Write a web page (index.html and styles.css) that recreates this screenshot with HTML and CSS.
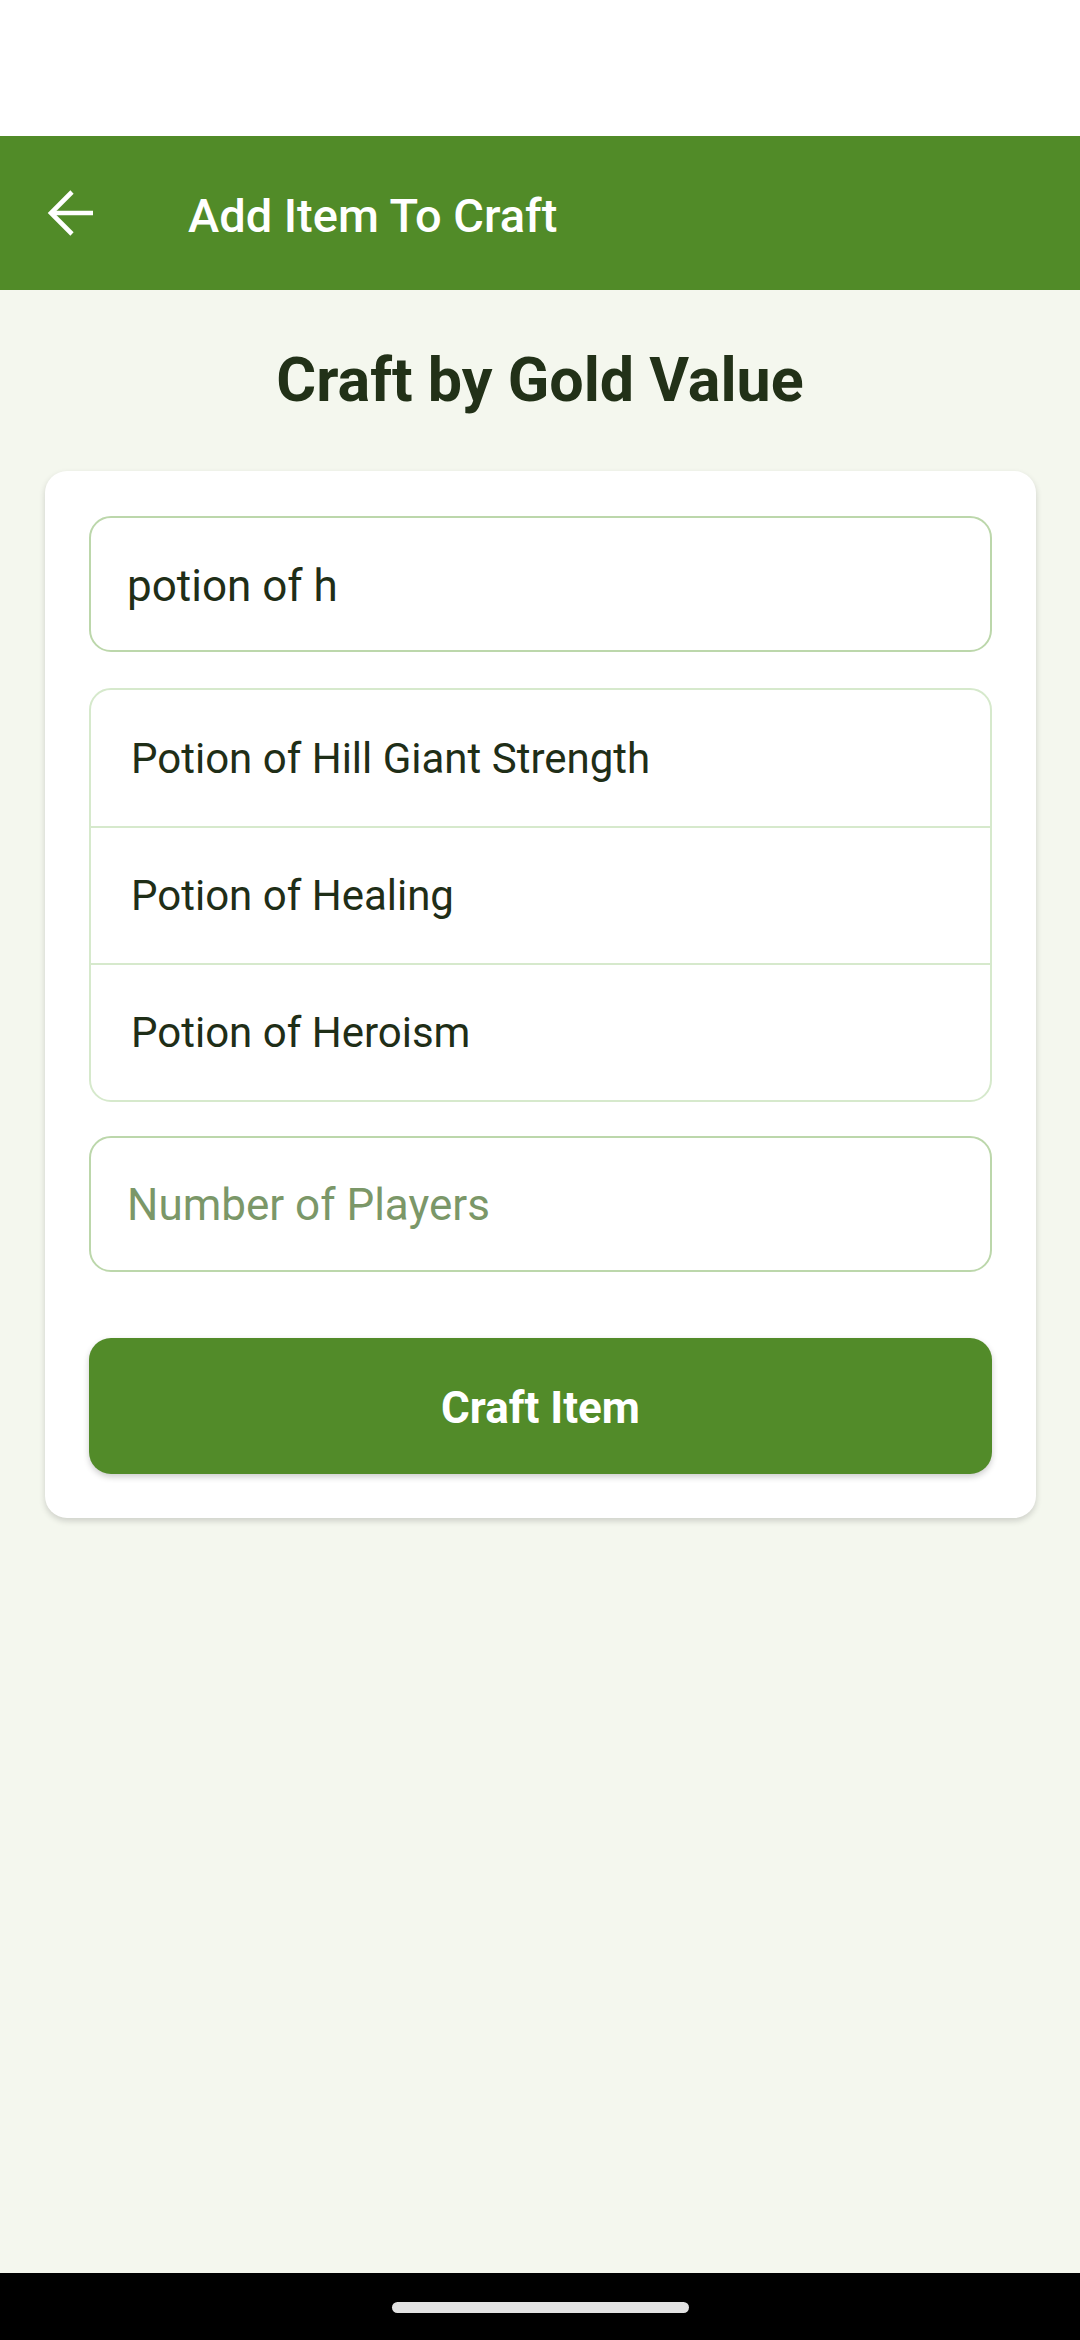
FILE: index.html
```html
<!DOCTYPE html>
<html>
<head>
<meta charset="utf-8">
<link rel="stylesheet" href="styles.css">
</head>
<body>
<div class="screen">
  <div class="status-bar"></div>
  <header class="app-bar">
    <div class="back">
      <svg width="66" height="66" viewBox="0 0 66 66">
        <polyline points="22.5,-1 1.5,20 22.5,41" transform="translate(11.5,13)" fill="none" stroke="#ffffff" stroke-width="4.6" stroke-linejoin="miter" stroke-linecap="butt"/>
        <line x1="14" y1="33" x2="55" y2="33" stroke="#ffffff" stroke-width="4.6"/>
      </svg>
    </div>
    <div class="app-title">Add Item To Craft</div>
  </header>
  <main class="content">
    <h1 class="page-title">Craft by Gold Value</h1>
    <section class="card">
      <div class="field">potion of h</div>
      <div class="suggestions">
        <div class="suggestion">Potion of Hill Giant Strength</div>
        <div class="suggestion">Potion of Healing</div>
        <div class="suggestion">Potion of Heroism</div>
      </div>
      <div class="field placeholder">Number of Players</div>
      <div class="button">Craft Item</div>
    </section>
  </main>
  <footer class="nav-bar"><div class="handle"></div></footer>
</div>
</body>
</html>
```
FILE: styles.css
```css
* { box-sizing: border-box; }
html, body { margin: 0; padding: 0; }
body {
  width: 1080px;
  height: 2340px;
  font-family: Roboto, "Noto Sans", sans-serif;
  background: #f4f7ee;
}
.screen {
  width: 1080px;
  height: 2340px;
  display: flex;
  flex-direction: column;
}
.status-bar {
  height: 136px;
  background: #ffffff;
  flex: none;
}
.app-bar {
  height: 154px;
  flex: none;
  background: #518b28;
  display: flex;
  align-items: center;
}
.back {
  width: 66px;
  height: 66px;
  margin-left: 38px;
  display: flex;
}
.app-title {
  margin-left: 84px;
  color: #ffffff;
  font-size: 47px;
  font-weight: 500;
  padding-top: 4px;
}
.content {
  flex: 1;
  display: flex;
  flex-direction: column;
  padding-top: 53px;
}
.page-title {
  margin: 0;
  text-align: center;
  font-size: 61px;
  line-height: 75px;
  font-weight: 700;
  color: #223118;
}
.card {
  margin: 53px 44px 0 45px;
  background: #ffffff;
  border-radius: 22px;
  padding: 45px 44px 44px 44px;
  box-shadow: 0 3px 6px rgba(0, 0, 0, 0.16);
  display: flex;
  flex-direction: column;
}
.field {
  height: 136px;
  border: 2px solid #bcd7ab;
  border-radius: 22px;
  display: flex;
  align-items: center;
  padding-left: 36px;
  padding-top: 4px;
  font-size: 44px;
  color: #1f2e17;
}
.field.placeholder {
  color: #7b9768;
  margin-top: 34px;
  padding-top: 2px;
}
.suggestions {
  margin-top: 36px;
  border: 2px solid #d6e9cc;
  border-radius: 22px;
  display: flex;
  flex-direction: column;
  overflow: hidden;
}
.suggestion {
  height: 136px;
  display: flex;
  align-items: center;
  padding-left: 40px;
  font-size: 42px;
  color: #1f2e17;
}
.suggestion + .suggestion {
  border-top: 2px solid #d6e9cc;
  height: 137px;
}
.button {
  margin-top: 66px;
  height: 136px;
  background: #528b29;
  border-radius: 22px;
  box-shadow: 0 3px 6px rgba(0, 0, 0, 0.2);
  display: flex;
  align-items: center;
  justify-content: center;
  padding-top: 4px;
  color: #ffffff;
  font-size: 44px;
  font-weight: 700;
}
.nav-bar {
  height: 67px;
  flex: none;
  background: #000000;
  display: flex;
  justify-content: center;
  padding-top: 29px;
}
.handle {
  width: 297px;
  height: 11px;
  border-radius: 6px;
  background: #e2e2e2;
}
```
